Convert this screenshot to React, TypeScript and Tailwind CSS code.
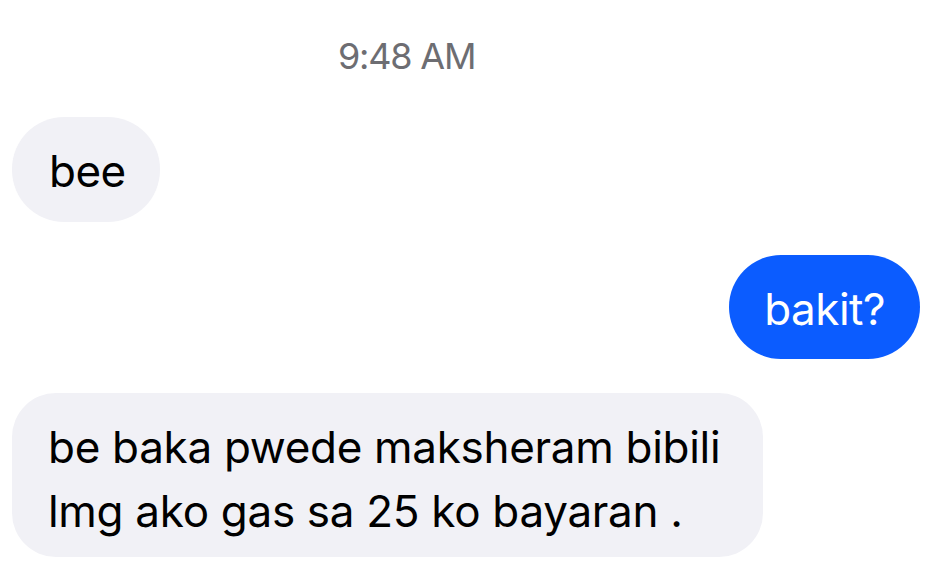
export default function App() {
  return (
    <div
      className="w-[928px] h-[561px] bg-white overflow-hidden flex flex-col"
      style={{ fontFamily: "Inter, 'Noto Sans', sans-serif" }}
    >
      <div className="pt-[32px] pl-[338px] text-[36px] leading-[48px] text-[#6d6d72] tracking-[-1.2px]">
        9:48 AM
      </div>

      <div className="mt-[37px] pl-[12px] pr-[8px] flex flex-col">
        <div className="self-start rounded-[52px] bg-[#f1f1f6] pl-[37px] pr-[34px] pt-[22px] pb-[19px] text-[44px] leading-[64px] text-black tracking-[-0.5px]">
          bee
        </div>

        <div className="mt-[33px] self-end rounded-[52px] bg-[#0b5cff] px-[35px] pt-[22px] pb-[18px] text-[44px] leading-[64px] text-white tracking-[-0.5px]">
          bakit?
        </div>

        <div className="mt-[34px] self-start w-[751px] rounded-[44px] bg-[#f1f1f6] px-[36px] pt-[22px] pb-[14px] text-[44px] leading-[64px] text-black tracking-[-0.3px]">
          be baka pwede maksheram bibili
          <br />
          lmg ako gas sa 25 ko bayaran .
        </div>
      </div>
    </div>
  );
}
